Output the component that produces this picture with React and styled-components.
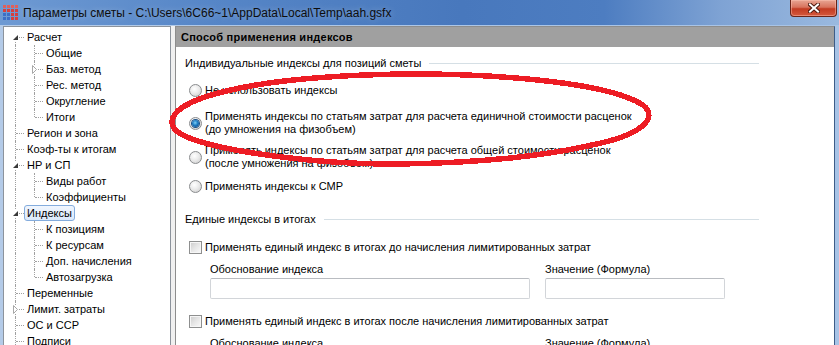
import React from "react";
import styled, { createGlobalStyle } from "styled-components";

const GlobalStyle = createGlobalStyle`
  html, body {
    margin: 0;
    padding: 0;
    overflow: hidden;
  }
  body {
    background: #a9c4e6;
    font-family: "Liberation Sans", Tahoma, sans-serif;
    color: #101010;
  }
`;

const Window = styled.div`
  position: relative;
  width: 839px;
  height: 345px;
  display: flex;
  flex-direction: column;
  background: linear-gradient(to right, #b4cbe8, #a7c3e6);
  overflow: hidden;
`;

const TitleBar = styled.div`
  height: 25px;
  flex: none;
  display: flex;
  align-items: center;
  padding-left: 2px;
  background: linear-gradient(
    to right,
    #6e9ad3 0%,
    #5686c7 25%,
    #4878bd 55%,
    #4d7dc1 72%,
    #7fa3d4 86%,
    #9ab9df 100%
  );
`;

const TitleText = styled.span`
  margin-left: 4px;
  font-size: 12px;
  color: #0d0d0d;
  text-shadow: 0 0 6px rgba(255, 255, 255, 0.35);
  white-space: nowrap;
`;

const CloseButton = styled.div`
  margin-left: auto;
  margin-right: 2px;
  align-self: flex-start;
  width: 47px;
  height: 17px;
  box-sizing: border-box;
  display: flex;
  align-items: center;
  justify-content: center;
  border: 1px solid #6a2418;
  border-top: none;
  border-radius: 0 0 4px 4px;
  background: linear-gradient(
    to bottom,
    #e8a593 0%,
    #d8735d 45%,
    #c23b22 55%,
    #d4593d 100%
  );
  box-shadow: inset 0 0 0 1px rgba(255, 200, 185, 0.45);
`;

const Body = styled.div`
  flex: 1;
  display: flex;
  padding: 1px 4px 0 3px;
  min-height: 0;
`;

const Tree = styled.nav`
  width: 168px;
  flex: none;
  box-sizing: border-box;
  background: #fff;
  border: 1px solid #8c939c;
  border-bottom: none;
  padding: 2px 0 0 1px;
  font-size: 11px;
  overflow: hidden;
`;

const Splitter = styled.div`
  width: 4px;
  flex: none;
  background: #f0f0f0;
`;

const TreeRow = styled.div`
  display: flex;
  height: 16px;
`;

const Guide = styled.span`
  position: relative;
  width: 19px;
  flex: none;
  display: flex;
  align-items: center;
  padding-left: 7px;
  box-sizing: border-box;

  &::before {
    content: "";
    display: ${(p) => (p.$up || p.$down ? "block" : "none")};
    position: absolute;
    left: 10px;
    top: ${(p) => (p.$up ? "0" : "8px")};
    bottom: ${(p) => (p.$down ? "0" : "8px")};
    border-left: 1px dotted #a0a0a0;
  }

  &::after {
    content: "";
    display: ${(p) => (p.$branch ? "block" : "none")};
    position: absolute;
    left: 11px;
    right: 0;
    top: 8px;
    border-top: 1px dotted #a0a0a0;
  }
`;

const Expander = styled.svg`
  position: relative;
  z-index: 1;
  background: #fff;
  flex: none;
`;

const TreeLabel = styled.span`
  box-sizing: border-box;
  height: 16px;
  line-height: 14px;
  padding: 0 2px;
  border: 1px solid ${(p) => (p.$selected ? "#84acdd" : "transparent")};
  border-radius: 3px;
  background: ${(p) =>
    p.$selected ? "linear-gradient(to bottom, #f0f6fe, #dbe9fb)" : "transparent"};
  color: #000;
  white-space: nowrap;
`;

const Panel = styled.section`
  width: 660px;
  flex: none;
  box-sizing: border-box;
  display: flex;
  flex-direction: column;
  background: #fff;
  border: 1px solid #8d8d8d;
  border-right-color: #3e5d88;
  border-bottom: none;
`;

const PanelHeader = styled.div`
  height: 20px;
  flex: none;
  line-height: 20px;
  padding-left: 5px;
  background: #a0a0a0;
  font-size: 11px;
  font-weight: bold;
  letter-spacing: 0.25px;
  color: #000;
`;

const PanelBody = styled.div`
  padding: 10px 75px 0 9px;
  font-size: 11px;
  line-height: 13px;
  color: #000;
`;

const GroupTitle = styled.div`
  display: flex;
  align-items: center;
  gap: 8px;
  margin-top: ${(p) => p.$gap || 0}px;
  white-space: nowrap;
`;

const GroupLine = styled.span`
  flex: 1;
  height: 1px;
  background: #d5dfe5;
`;

const Option = styled.label`
  display: flex;
  align-items: center;
  gap: 3px;
  margin-left: 4px;
  margin-top: ${(p) => p.$gap || 0}px;
`;

const Radio = styled.span`
  width: 13px;
  height: 13px;
  flex: none;
  box-sizing: border-box;
  display: flex;
  align-items: center;
  justify-content: center;
  border-radius: 50%;
  border: 1px solid #8a8c8e;
  background: radial-gradient(circle at 40% 35%, #ffffff 0, #ebebeb 45%, #c8c8c8 100%);

  &::after {
    content: "";
    display: ${(p) => (p.$checked ? "block" : "none")};
    width: 7px;
    height: 7px;
    border-radius: 50%;
    background: radial-gradient(circle at 45% 40%, #7fd0f7 0, #1c7ac2 45%, #0b3f78 100%);
    box-shadow: 0 0 0 1px #1a4f86;
  }
`;

const Checkbox = styled.span`
  width: 13px;
  height: 13px;
  flex: none;
  box-sizing: border-box;
  border: 1px solid #8e8f8f;
  background: linear-gradient(135deg, #cbcbcb 0%, #e6e6e6 50%, #fafafa 100%);
  box-shadow: inset 0 0 0 1px #f6f6f6;
`;

const Fields = styled.div`
  display: grid;
  grid-template-columns: 320px 180px;
  column-gap: 15px;
  row-gap: 2px;
  margin: ${(p) => p.$gap || 0}px 0 0 25px;
`;

const FieldLabel = styled.span`
  white-space: nowrap;
  padding-top: 1px;
`;

const TextBox = styled.div`
  height: 21px;
  box-sizing: border-box;
  border: 1px solid #d2d5d9;
  border-top-color: #b9bcc1;
  border-radius: 2px;
  background: #fff;
`;

const Annotation = styled.svg`
  position: absolute;
  left: 0;
  top: 0;
  pointer-events: none;
`;

const treeItems = [
  { text: "Расчет", level: 0, expander: "open", first: true },
  { text: "Общие", level: 1 },
  { text: "Баз. метод", level: 1, expander: "closed" },
  { text: "Рес. метод", level: 1 },
  { text: "Округление", level: 1 },
  { text: "Итоги", level: 1, last: true },
  { text: "Регион и зона", level: 0 },
  { text: "Коэф-ты к итогам", level: 0 },
  { text: "НР и СП", level: 0, expander: "open" },
  { text: "Виды работ", level: 1 },
  { text: "Коэффициенты", level: 1, last: true },
  { text: "Индексы", level: 0, expander: "open", selected: true },
  { text: "К позициям", level: 1 },
  { text: "К ресурсам", level: 1 },
  { text: "Доп. начисления", level: 1 },
  { text: "Автозагрузка", level: 1, last: true },
  { text: "Переменные", level: 0 },
  { text: "Лимит. затраты", level: 0, expander: "closed" },
  { text: "ОС и ССР", level: 0 },
  { text: "Подписи", level: 0 },
];

const AppIcon = () => {
  const cells = [];
  for (let r = 0; r < 4; r++) {
    for (let c = 0; c < 4; c++) {
      const blue = r >= 2 && c < 2;
      const color = blue ? "#3d6fc6" : r === 0 ? "#e0605a" : "#d6403c";
      cells.push(
        <rect key={r + "-" + c} x={1 + c * 4} y={1 + r * 4} width="3" height="3" fill={color} />
      );
    }
  }
  return (
    <svg width="17" height="17" viewBox="0 0 17 17">
      {cells}
    </svg>
  );
};

const ExpanderIcon = ({ type }) =>
  type === "open" ? (
    <Expander width="7" height="9" viewBox="0 0 7 9">
      <polygon points="6,2 6,7 1,7" fill="#3a3a3a" />
    </Expander>
  ) : (
    <Expander width="7" height="9" viewBox="0 0 7 9">
      <polygon points="1.5,0.5 5.5,4.5 1.5,8.5" fill="#fff" stroke="#a8a8a8" />
    </Expander>
  );

const TreeItem = ({ item }) => (
  <TreeRow>
    {item.level === 1 && <Guide $up $down />}
    <Guide $up={!item.first} $down={!item.last} $branch>
      {item.expander && <ExpanderIcon type={item.expander} />}
    </Guide>
    <TreeLabel $selected={item.selected}>{item.text}</TreeLabel>
  </TreeRow>
);

export default function App() {
  return (
    <Window>
      <GlobalStyle />
      <TitleBar>
        <AppIcon />
        <TitleText>Параметры сметы - C:\Users\6С66~1\AppData\Local\Temp\aah.gsfx</TitleText>
        <CloseButton>
          <svg width="12" height="10" viewBox="0 0 12 10">
            <path d="M2 1.5 L10 8.5 M10 1.5 L2 8.5" stroke="#4d1a10" strokeWidth="4" strokeLinecap="square" />
            <path d="M2 1.5 L10 8.5 M10 1.5 L2 8.5" stroke="#fff" strokeWidth="2" strokeLinecap="square" />
          </svg>
        </CloseButton>
      </TitleBar>
      <Body>
        <Tree>
          {treeItems.map((item) => (
            <TreeItem key={item.text} item={item} />
          ))}
        </Tree>
        <Splitter />
        <Panel>
          <PanelHeader>Способ применения индексов</PanelHeader>
          <PanelBody>
            <GroupTitle>
              Индивидуальные индексы для позиций сметы
              <GroupLine />
            </GroupTitle>
            <Option $gap={14}>
              <Radio />
              <span>Не использовать индексы</span>
            </Option>
            <Option $gap={13}>
              <Radio $checked />
              <span>
                Применять индексы по статьям затрат для расчета единичной стоимости расценок
                <br />
                (до умножения на физобъем)
              </span>
            </Option>
            <Option $gap={8}>
              <Radio />
              <span>
                Применять индексы по статьям затрат для расчета общей стоимости расценок
                <br />
                (после умножения на физобъем)
              </span>
            </Option>
            <Option $gap={10}>
              <Radio />
              <span>Применять индексы к СМР</span>
            </Option>
            <GroupTitle $gap={20}>
              Единые индексы в итогах
              <GroupLine />
            </GroupTitle>
            <Option $gap={15}>
              <Checkbox />
              <span>Применять единый индекс в итогах до начисления лимитированных затрат</span>
            </Option>
            <Fields $gap={8}>
              <FieldLabel>Обоснование индекса</FieldLabel>
              <FieldLabel>Значение (Формула)</FieldLabel>
              <TextBox />
              <TextBox />
            </Fields>
            <Option $gap={16}>
              <Checkbox />
              <span>Применять единый индекс в итогах после начисления лимитированных затрат</span>
            </Option>
            <Fields $gap={8}>
              <FieldLabel>Обоснование индекса</FieldLabel>
              <FieldLabel>Значение (Формула)</FieldLabel>
              <TextBox />
              <TextBox />
            </Fields>
          </PanelBody>
        </Panel>
      </Body>
      <Annotation width="839" height="345" viewBox="0 0 839 345">
        <path
          d="M172 122 C172 100 240 80 365 75 C470 71 604 80 643 105 C659 118 642 135 592 145 C540 157 470 163 400 164 C320 165 230 152 195 140 C180 135 172 130 172 122 Z"
          fill="none"
          stroke="#ed1c24"
          strokeWidth="5.5"
          shapeRendering="crispEdges"
        />
      </Annotation>
    </Window>
  );
}
